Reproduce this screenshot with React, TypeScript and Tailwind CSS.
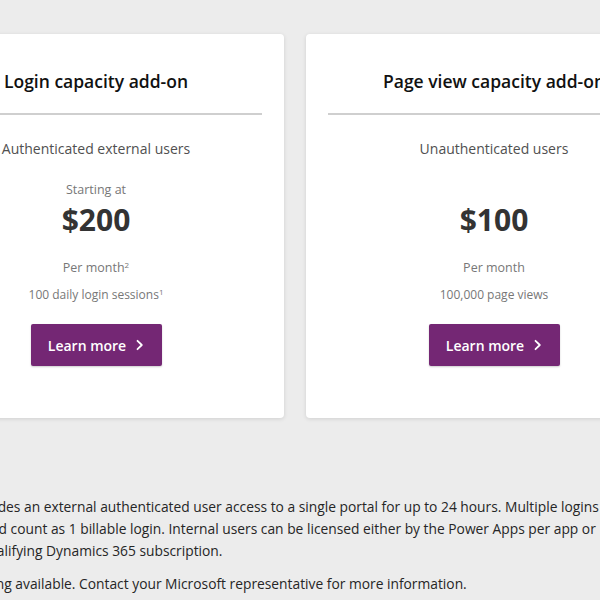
import React from "react";

const font = { fontFamily: '"Segoe UI", "Open Sans", "Noto Sans", sans-serif' };

function Chevron() {
  return (
    <svg width="9" height="12" viewBox="0 0 9 12" fill="none" className="ml-[9px]">
      <path d="M2.5 1.8 L6.8 6 L2.5 10.2" stroke="white" strokeWidth="1.8" strokeLinecap="round" strokeLinejoin="round" />
    </svg>
  );
}

function Card({
  title,
  subtitle,
  starting,
  price,
  per,
  perSup,
  detail,
  detailSup,
}: {
  title: string;
  subtitle: string;
  starting: boolean;
  price: string;
  per: string;
  perSup?: string;
  detail: string;
  detailSup?: string;
}) {
  return (
    <div className="w-[376px] h-[384px] shrink-0 bg-white rounded-[4px] shadow-[0_1px_4px_rgba(0,0,0,0.12)] px-[22px] pt-[35px] flex flex-col items-center">
      <h2 className="text-[17.5px] leading-[24px] font-semibold text-[#111] whitespace-nowrap">{title}</h2>
      <div className="w-full h-[2px] bg-[#cfcfcf] mt-[20px]" />
      <p className="mt-[24px] text-[14px] leading-[20px] text-[#505050]">{subtitle}</p>
      <p className="mt-[22px] text-[12.5px] leading-[18px] text-[#777]">{starting ? "Starting at" : "\u00a0"}</p>
      <p className="mt-[1px] text-[30px] leading-[40px] font-bold text-[#333]">{price}</p>
      <p className="mt-[19px] text-[12.5px] leading-[18px] text-[#777]">
        {per}
        {perSup && <sup className="text-[8px]">{perSup}</sup>}
      </p>
      <p className="mt-[9px] text-[12px] leading-[18px] text-[#777]">
        {detail}
        {detailSup && <sup className="text-[8px]">{detailSup}</sup>}
      </p>
      <button className="mt-[20px] w-[131px] h-[42px] bg-[#742774] rounded-[2px] text-white text-[14px] font-semibold flex items-center justify-center shadow-[0_1px_2px_rgba(0,0,0,0.2)]">
        Learn more
        <Chevron />
      </button>
    </div>
  );
}

export default function App() {
  return (
    <div className="w-[600px] h-[600px] overflow-hidden bg-[#ececec]" style={font}>
      <div className="flex gap-[22px] ml-[-92px] pt-[34px]">
        <Card
          title="Login capacity add-on"
          subtitle="Authenticated external users"
          starting={true}
          price="$200"
          per="Per month"
          perSup="2"
          detail="100 daily login sessions"
          detailSup="1"
        />
        <Card
          title="Page view capacity add-on"
          subtitle="Unauthenticated users"
          starting={false}
          price="$100"
          per="Per month"
          detail="100,000 page views"
        />
      </div>
      <div className="w-[900px] mt-[78px] text-[13.8px] leading-[22px] text-[#262626] whitespace-nowrap">
        <p>
          <span className="block ml-[-173px]">
            <sup>1</sup>A daily login session provides an external authenticated user access to a single portal for up to 24 hours. Multiple logins
          </span>
          <span className="block ml-[-160px]">
            during the 24-hour period count as 1 billable login. Internal users can be licensed either by the Power Apps per app or
          </span>
          <span className="block ml-[-148px]">per user plans, or a qualifying Dynamics 365 subscription.</span>
        </p>
        <p className="mt-[11px] ml-[-158px]">
          <sup>2</sup>Additional volume pricing available. Contact your Microsoft representative for more information.
        </p>
      </div>
    </div>
  );
}
